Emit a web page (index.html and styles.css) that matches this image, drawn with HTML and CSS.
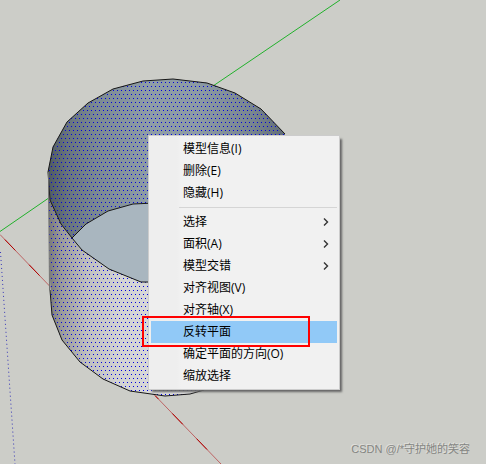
FILE: index.html
```html
<!DOCTYPE html>
<html lang="zh-CN">
<head>
<meta charset="utf-8">
<title>SketchUp</title>
<link rel="stylesheet" href="styles.css">
</head>
<body>
<main class="viewport">
<svg class="scene" width="486" height="464" viewBox="0 0 486 464" aria-hidden="true">
  <defs>
    <linearGradient id="inside" gradientUnits="userSpaceOnUse" x1="48" y1="0" x2="288" y2="0">
      <stop offset="0" stop-color="#4f5a61"/><stop offset=".08" stop-color="#68747c"/><stop offset=".2" stop-color="#7b8992"/><stop offset=".42" stop-color="#8f9da6"/><stop offset=".62" stop-color="#8d9ba4"/><stop offset=".85" stop-color="#79868f"/><stop offset="1" stop-color="#606b74"/>
    </linearGradient>
    <linearGradient id="outside" gradientUnits="userSpaceOnUse" x1="48" y1="0" x2="180" y2="0">
      <stop offset="0" stop-color="#777"/><stop offset=".1" stop-color="#9a9a9a"/><stop offset=".3" stop-color="#c0c0c0"/><stop offset=".55" stop-color="#d3d3d3"/><stop offset="1" stop-color="#dcdcdc"/>
    </linearGradient>
    <pattern id="dots" width="4" height="8" patternUnits="userSpaceOnUse">
      <path fill="#0000e0" d="M1 2h1v1h-1zM3 6h1v1h-1z"/>
    </pattern>
    <path id="wall" d="M48 172L50 200L61 224L72 238L82 250L109 269L141 282L300 282L300 360L204 390L190 394L165 396L130 391L103 379L80 362L62 340L52 315L50 280Z"/>
    <path id="bowl" d="M48 172L53 147L67 122L88 103L113 89L143 81L173 79L207 83L235 93L261 109L285 134L285 210L155 203L133 204L108 211L86 224L72 238L61 224L50 200Z"/>
  </defs>
  <path stroke="#21b12b" d="M0 231.500L48 198.500M213 86L340 0"/>
  <path stroke="#bd6464" d="M0 234.500L51 287.500M155 395.500L221 464"/>
  <path stroke="#b00000" stroke-dasharray="15 20" stroke-dashoffset="-7" d="M0 234.500L51 287.500"/>
  <path stroke="#b00000" stroke-dasharray="15 20" stroke-dashoffset="-25" d="M155 395.500L221 464"/>
  <path stroke="#3333b8" stroke-dasharray="1 3" d="M.5 252L15 464"/>
  <use href="#wall" fill="url(#outside)"/>
  <use href="#bowl" fill="url(#inside)"/>
  <use href="#wall" fill="url(#dots)"/>
  <use href="#bowl" fill="url(#dots)"/>
  <path fill="#a9b6bf" d="M72 238L86 224L108 211L133 204L155 203L180 285L141 282L109 269L82 250Z"/>
  <path fill="none" stroke="#161616" d="M285 134L261 109L235 93L207 83L173 79L143 81L113 89L88 103L67 122L53 147L48 172L50 200L61 224L72 238L82 250L109 269L141 282H150M72 238L86 224L108 211L133 204L155 203M50 290L52 315L62 340L80 362L103 379L130 391L165 396L190 394L204 390"/>
  <path stroke="#707070" d="M48.500 172L49.500 290"/>
</svg>
<nav class="menu" aria-label="右键菜单">
  <button>模型信息(I)</button>
  <button>删除(E)</button>
  <button>隐藏(H)</button>
  <hr>
  <button>选择<svg class="arrow" viewBox="0 0 6 8"><path d="M1 .5L4.500 4L1 7.500"/></svg></button>
  <button>面积(A)<svg class="arrow" viewBox="0 0 6 8"><path d="M1 .5L4.500 4L1 7.500"/></svg></button>
  <button>模型交错<svg class="arrow" viewBox="0 0 6 8"><path d="M1 .5L4.500 4L1 7.500"/></svg></button>
  <button>对齐视图(V)</button>
  <button>对齐轴(X)</button>
  <button class="active">反转平面</button>
  <button>确定平面的方向(O)</button>
  <button>缩放选择</button>
</nav>
<div class="callout"></div>
<p class="watermark">CSDN @/*守护她的笑容</p>
</main>
</body>
</html>
```

FILE: styles.css
```css
body {
  margin: 0;
  background: #cccdc8;
  font-family: "Open Sans", "Noto Sans CJK SC", sans-serif;
}
.viewport {
  position: relative;
  min-height: 100vh;
  overflow: hidden;
}
.scene {
  display: block;
}
.menu {
  position: absolute;
  left: 148px;
  top: 135px;
  width: 192px;
  box-sizing: border-box;
  padding: 2px;
  border: 1px solid #ccc;
  background: linear-gradient(90deg, #eee 28px, #f1f1f1 32px);
  box-shadow: 3px 3px 2px -1px #666;
}
.menu button {
  display: flex;
  align-items: center;
  justify-content: space-between;
  width: 100%;
  height: 22px;
  padding: 0 8px 0 32px;
  border: 0;
  background: none;
  color: #000;
  font: 12px/22px "Open Sans", "Noto Sans CJK SC", sans-serif;
  white-space: nowrap;
}
.menu .active {
  background: #91c9f7;
}
.menu hr {
  height: 1px;
  margin: 3px 0 3px 28px;
  border: 0;
  background: #d5d5d5;
}
.arrow {
  width: 6px;
  height: 8px;
  fill: none;
  stroke: #333;
  stroke-width: 1.4;
}
.callout {
  position: absolute;
  left: 142px;
  top: 316px;
  width: 168px;
  height: 31px;
  box-sizing: border-box;
  border: 2px solid #f00;
}
.watermark {
  position: absolute;
  right: 16px;
  bottom: 5px;
  margin: 0;
  color: #858683;
  font: 11px/20px "Liberation Sans", "Noto Sans CJK SC", sans-serif;
  text-shadow: -1px -1px 0 #e0e0dd;
}
```
